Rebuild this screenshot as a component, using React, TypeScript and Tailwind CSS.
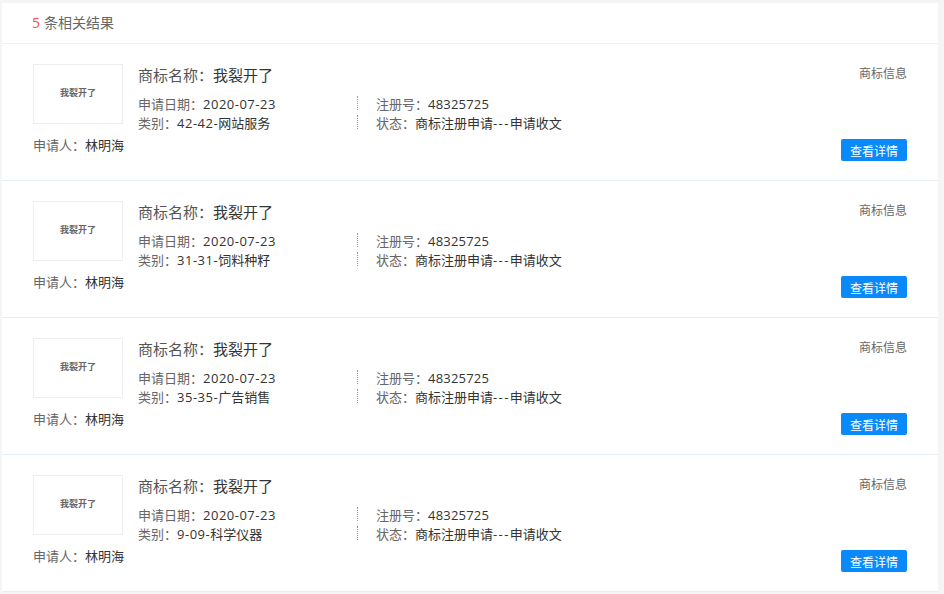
const font = {
  fontFamily: '"Open Sans", "Noto Sans CJK SC", sans-serif',
};

type ResultRow = {
  code: string;
  category: string;
};

const rows: ResultRow[] = [
  { code: "42-42-", category: "网站服务" },
  { code: "31-31-", category: "饲料种籽" },
  { code: "35-35-", category: "广告销售" },
  { code: "9-09-", category: "科学仪器" },
];

const Num = ({ children }: { children: string }) => (
  <span className="tracking-[0.5px] text-[#333333]">{children}</span>
);

const Row = ({ code, category }: ResultRow) => (
  <div className="flex h-[137px] border-b border-[#e6eef6] px-[31px]">
    <div className="flex w-[105px] shrink-0 flex-col pt-[20px]">
      <div className="flex h-[60px] w-[90px] items-center justify-center border border-[#eeeeee] pb-[2px] text-[9px] font-bold text-[#666666]">
        我裂开了
      </div>
      <div className="mt-[11px] text-[13px] leading-[20px] whitespace-nowrap text-[#666666]">
        申请人&#xFF1A;<span className="text-[#333333]">林明海</span>
      </div>
    </div>
    <div className="flex-1 pt-[19px]">
      <div className="text-[15px] leading-[24px] text-[#333333]">
        <span className="text-[#555555]">商标名称&#xFF1A;</span>我裂开了
      </div>
      <div className="mt-[8px] flex text-[13px] leading-[19px] text-[#666666]">
        <div className="w-[219px]">
          <div>
            申请日期&#xFF1A;<Num>2020-07-23</Num>
          </div>
          <div>
            类别&#xFF1A;<Num>{code}</Num>
            <span className="text-[#333333]">{category}</span>
          </div>
        </div>
        <div className="flex flex-col gap-[5px] py-[1px]">
          <div className="h-[14px] border-l border-dotted border-[#999999]" />
          <div className="h-[14px] border-l border-dotted border-[#999999]" />
        </div>
        <div className="ml-[18px]">
          <div>
            注册号&#xFF1A;<span className="tracking-[0.2px] text-[#333333]">48325725</span>
          </div>
          <div>
            状态&#xFF1A;
            <span className="text-[#333333]">
              商标注册申请<span className="tracking-[1.4px]">---</span>申请收文
            </span>
          </div>
        </div>
      </div>
    </div>
    <div className="flex flex-col items-end justify-between pt-[20px] pb-[19px]">
      <div className="text-[12px] leading-[20px] text-[#666666]">商标信息</div>
      <button className="h-[22px] w-[66px] rounded-[2px] bg-[#0a8afa] pt-[3px] text-[12px] text-white">
        查看详情
      </button>
    </div>
  </div>
);

export default function App() {
  return (
    <div className="h-[594px] overflow-hidden bg-[#f5f5f5] pt-[3px] pr-[6px] pl-[2px]" style={font}>
      <div className="bg-white">
        <div className="flex h-[41px] items-center border-b border-[#eef2f6] pb-[2px] pl-[30px] text-[14px] text-[#666666]">
          <span className="mr-[4px] text-[#ff4d4f]">5</span>条相关结果
        </div>
        {rows.map((row) => (
          <Row key={row.code} code={row.code} category={row.category} />
        ))}
      </div>
    </div>
  );
}
